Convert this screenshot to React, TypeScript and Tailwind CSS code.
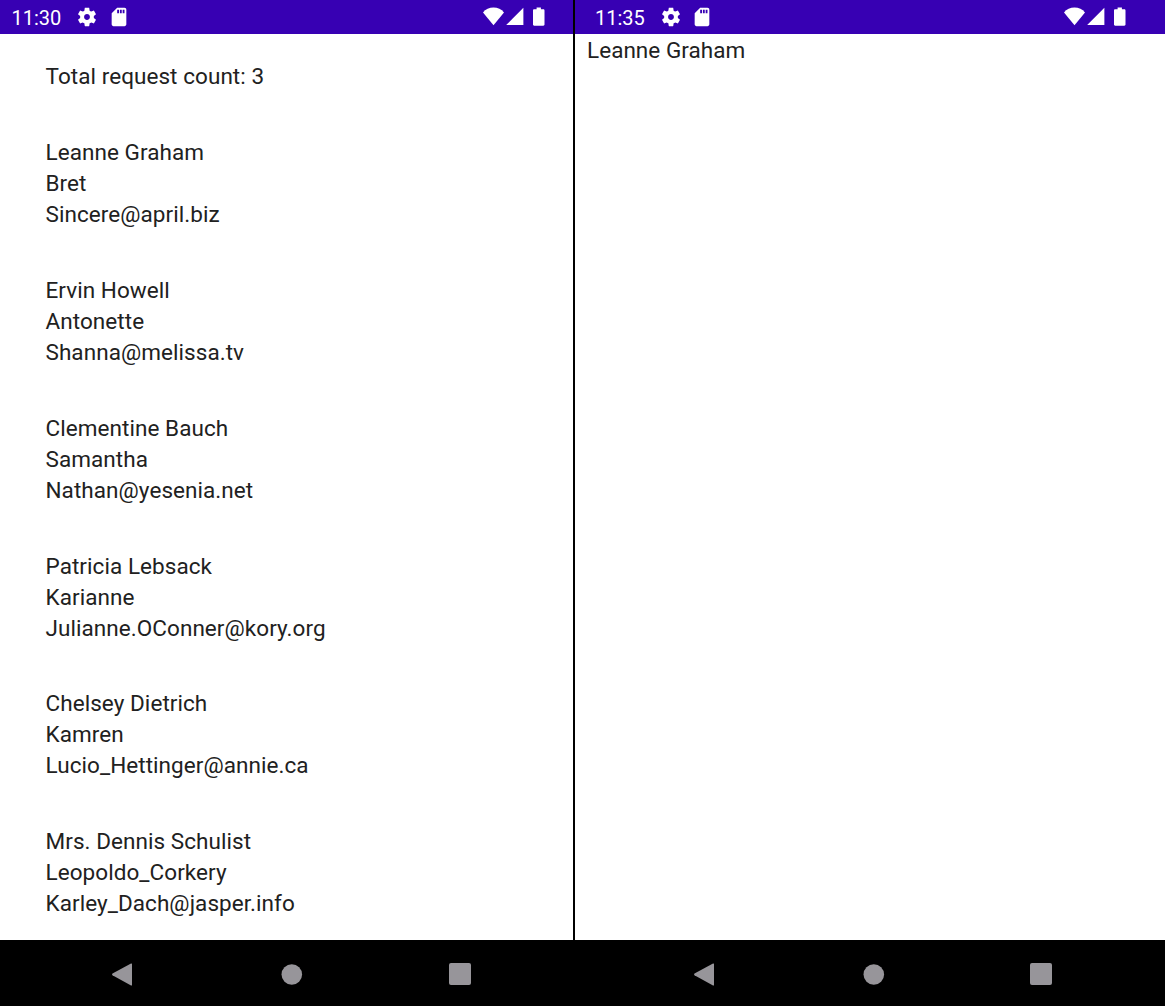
const users = [
  ["Leanne Graham", "Bret", "Sincere@april.biz"],
  ["Ervin Howell", "Antonette", "Shanna@melissa.tv"],
  ["Clementine Bauch", "Samantha", "Nathan@yesenia.net"],
  ["Patricia Lebsack", "Karianne", "Julianne.OConner@kory.org"],
  ["Chelsey Dietrich", "Kamren", "Lucio_Hettinger@annie.ca"],
  ["Mrs. Dennis Schulist", "Leopoldo_Corkery", "Karley_Dach@jasper.info"],
];

function StatusBar({ time, className }: { time: string; className: string }) {
  return (
    <header className={`flex h-[34px] shrink-0 items-center bg-[#3700b3] text-white ${className}`}>
      <span className="w-[64.5px] pt-[2px] text-[20px] leading-[34px] whitespace-nowrap">{time}</span>
      <svg className="size-[22px]" viewBox="0 0 24 24" fill="currentColor">
        <path d="M19.43 12.98c.04-.32.07-.64.07-.98s-.03-.66-.07-.98l2.11-1.65c.19-.15.24-.42.12-.64l-2-3.46c-.12-.22-.39-.3-.61-.22l-2.49 1c-.52-.4-1.08-.73-1.69-.98l-.38-2.65C14.46 2.18 14.25 2 14 2h-4c-.25 0-.46.18-.49.42l-.38 2.65c-.61.25-1.17.59-1.69.98l-2.49-1c-.23-.09-.49 0-.61.22l-2 3.46c-.13.22-.07.49.12.64l2.11 1.65c-.04.32-.07.65-.07.98s.03.66.07.98l-2.11 1.65c-.19.15-.24.42-.12.64l2 3.46c.12.22.39.3.61.22l2.49-1c.52.4 1.08.73 1.69.98l.38 2.65c.03.24.24.42.49.42h4c.25 0 .46-.18.49-.42l.38-2.65c.61-.25 1.17-.59 1.69-.98l2.49 1c.23.09.49 0 .61-.22l2-3.46c.12-.22.07-.49-.12-.64l-2.11-1.65zM12 15.2c-1.77 0-3.2-1.43-3.2-3.2s1.43-3.2 3.2-3.2 3.2 1.43 3.2 3.2-1.43 3.2-3.2 3.2z" />
      </svg>
      <svg className="ml-[9.5px] size-[22px]" viewBox="0 0 24 24" fill="currentColor">
        <path d="M18 2h-8L4.02 8 4 20c0 1.1.9 2 2 2h12c1.1 0 2-.9 2-2V4c0-1.1-.9-2-2-2zm-6 6h-2V4h2v4zm3 0h-2V4h2v4zm3 0h-2V4h2v4z" />
      </svg>
      <div className="ml-auto flex items-center">
        <svg className="h-[18px] w-[21px] overflow-visible" viewBox="0 0 21 18" fill="currentColor">
          <path d="M10.5 17.3 0 4.4C2.5 1.2 6.3-.4 10.5-.4S18.5 1.2 21 4.4Z" />
        </svg>
        <svg className="ml-[2px] h-[18px] w-[18px] overflow-visible" viewBox="0 0 18 18" fill="currentColor">
          <path d="M0.2 17 17.4-.2v17.2Z" />
        </svg>
        <svg className="ml-[9.5px] h-[18px] w-[11.5px] overflow-visible" viewBox="0 0 11.5 18" fill="currentColor">
          <path d="M3.6-.4h4.3v1.7h2.4c.7 0 1.2.5 1.2 1.2v14c0 .7-.5 1.2-1.2 1.2H1.2C.5 17.7 0 17.2 0 16.5v-14c0-.7.5-1.2 1.2-1.2h2.4Z" />
        </svg>
      </div>
    </header>
  );
}

function NavBar({ className }: { className: string }) {
  return (
    <nav className={`flex h-[66px] shrink-0 items-center bg-black pt-[2px] text-[#97959a] ${className}`}>
      <svg className="h-[23px] w-[20px]" viewBox="0 0 20.2 23" fill="currentColor">
        <path d="M.5 10.6Q-.3 11.5.5 12.2L19.2 22.6Q20.2 23 20.2 22V1Q20.2 0 19.2.4Z" />
      </svg>
      <svg className="h-[21px] w-[23px] overflow-visible" viewBox="0 0 23 21" fill="currentColor">
        <circle cx="12.8" cy="10.5" r="10.3" />
      </svg>
      <svg className="size-[22px]" viewBox="0 0 22 22" fill="currentColor">
        <rect width="22" height="22" rx="2" />
      </svg>
    </nav>
  );
}

export default function App() {
  return (
    <div className="flex h-[1006px] w-[1165px] overflow-hidden bg-white font-[Roboto,sans-serif] text-[#212121]">
      <section className="flex w-[573px] flex-col">
        <StatusBar time="11:30" className="pr-[28.5px] pl-[11.5px]" />
        <main className="flex grow flex-col gap-[44.9px] pt-[27px] pl-[45.5px] text-[22.5px] leading-[31px] tracking-[0.06px]">
          <p>Total request count: 3</p>
          {users.map((user) => (
            <div key={user[0]}>
              {user.map((line) => (
                <p key={line}>{line}</p>
              ))}
            </div>
          ))}
        </main>
        <NavBar className="gap-[147px] pl-[112px]" />
      </section>
      <div className="w-[2px] bg-black" />
      <section className="flex w-[590px] flex-col">
        <StatusBar time="11:35" className="pr-[39.5px] pl-[20px]" />
        <main className="grow pt-px pl-[12px] text-[22.5px] leading-[31px] tracking-[0.04px]">
          <p>Leanne Graham</p>
        </main>
        <NavBar className="gap-[146.5px] pl-[119px]" />
      </section>
    </div>
  );
}
